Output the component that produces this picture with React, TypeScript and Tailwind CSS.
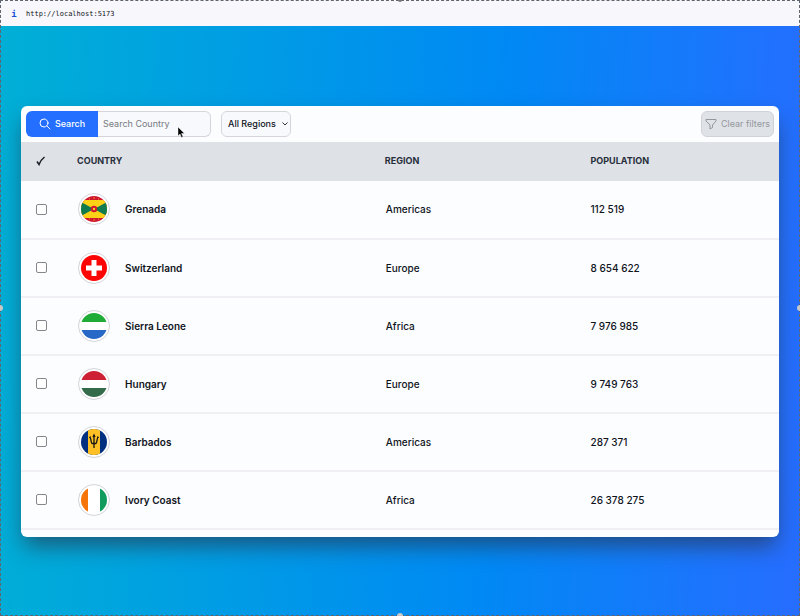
import { useState } from "react";
import type { ReactNode } from "react";

function Grenada() {
  return (
    <>
      <rect width="26" height="26" fill="#cf1530" />
      <rect y="4" width="26" height="18" fill="#fcd116" />
      <path d="M0 6 13 13 0 20ZM26 6 13 13 26 20Z" fill="#117a4e" />
      <circle cx="13" cy="13" r="3.2" fill="#cf1530" />
      <circle cx="13" cy="13" r="1.2" fill="#fcd116" />
      <path d="M12 2h2M12 24h2M8 3h1M17 3h1M8 23h1M17 23h1" stroke="#e98a22" />
    </>
  );
}

function Switzerland() {
  return (
    <>
      <rect width="26" height="26" fill="#fb0505" />
      <path d="M13 5v16M5 13h16" stroke="#fff" strokeWidth="5" />
    </>
  );
}

function Stripes({ top, bottom }: { top: string; bottom: string }) {
  return (
    <>
      <rect width="26" height="26" fill="#fff" />
      <rect width="26" height="9" fill={top} />
      <rect y="17" width="26" height="9" fill={bottom} />
    </>
  );
}

function Barbados() {
  return (
    <>
      <rect width="26" height="26" fill="#00307f" />
      <rect x="7" width="12" height="26" fill="#ffc026" />
      <path
        d="M13 7v12M9 8c1 1 1 6 2 6.500h4c1-.5 1-5.500 2-6.500M8.500 9l1-1.500M17.500 9l-1-1.500M12 8l1-2 1 2"
        fill="none"
        stroke="#141414"
        strokeWidth="1.300"
      />
    </>
  );
}

function IvoryCoast() {
  return (
    <>
      <rect width="26" height="26" fill="#fff" />
      <rect width="7" height="26" fill="#f77408" />
      <rect x="19" width="7" height="26" fill="#119b5c" />
    </>
  );
}

type Country = { name: string; region: string; population: string; flag: ReactNode };

const countries: Country[] = [
  { name: "Grenada", region: "Americas", population: "112 519", flag: <Grenada /> },
  { name: "Switzerland", region: "Europe", population: "8 654 622", flag: <Switzerland /> },
  { name: "Sierra Leone", region: "Africa", population: "7 976 985", flag: <Stripes top="#1fac36" bottom="#2868c6" /> },
  { name: "Hungary", region: "Europe", population: "9 749 763", flag: <Stripes top="#cd2034" bottom="#336b4b" /> },
  { name: "Barbados", region: "Americas", population: "287 371", flag: <Barbados /> },
  { name: "Ivory Coast", region: "Africa", population: "26 378 275", flag: <IvoryCoast /> },
];

function Flag({ children }: { children: ReactNode }) {
  return (
    <span className="flex size-8 shrink-0 items-center justify-center rounded-full border border-[#d3d5da] bg-white">
      <svg className="size-[26px] rounded-full" viewBox="0 0 26 26" aria-hidden="true">
        {children}
      </svg>
    </span>
  );
}

export default function App() {
  const [query, setQuery] = useState("");
  const [region, setRegion] = useState("All Regions");

  return (
    <div className="relative flex min-h-screen flex-col overflow-hidden bg-[linear-gradient(93deg,#00aed6_2%,#0089f4_61%,#256eff_98%)] font-['Inter',sans-serif] text-[10px] leading-4 text-[#10141c]">
      <div className="flex h-[26px] shrink-0 items-center gap-2 bg-[#f8f8fc] px-2.5 pt-0.5 font-['DejaVu_Sans_Mono',monospace] text-[7px] text-[#101018]">
        <span className="w-2 text-center text-[9px] font-bold text-[#1550d4]">i</span>
        <span>http://localhost:5173</span>
      </div>

      <main className="flex flex-1 items-center px-[21px]">
        <div className="w-full overflow-hidden rounded-md bg-[#fcfdff] pb-[7px] shadow-[0_12px_22px_-3px_rgb(40_50_70_/_0.65)]">
          <div className="flex h-9 items-center justify-between px-[5px] text-[9px]">
            <div className="flex items-center gap-2.5">
              <form className="flex" onSubmit={(e) => e.preventDefault()}>
                <button className="flex h-[26px] w-[72px] items-center justify-center gap-1 rounded-l-md bg-[#246fff] font-medium text-white">
                  <svg className="size-3" viewBox="0 0 12 12" fill="none" stroke="currentColor" strokeLinecap="round" aria-hidden="true">
                    <circle cx="5" cy="5" r="4" />
                    <path d="m8 8 3 3" />
                  </svg>
                  Search
                </button>
                <input
                  aria-label="Search Country"
                  placeholder="Search Country"
                  value={query}
                  onChange={(e) => setQuery(e.target.value)}
                  className="h-[26px] w-[113px] rounded-r-md border border-l-0 border-[#d4d6dc] bg-[#f8f9fd] px-[5px] placeholder:text-[#777980]"
                />
              </form>
              <div className="relative">
                <select
                  aria-label="Region"
                  value={region}
                  onChange={(e) => setRegion(e.target.value)}
                  className="h-[26px] w-[70px] appearance-none rounded-md border border-[#d4d6dc] bg-[#f8f9fd] pl-1.5 font-medium"
                >
                  <option>All Regions</option>
                  <option>Africa</option>
                  <option>Americas</option>
                  <option>Europe</option>
                </select>
                <svg className="pointer-events-none absolute top-2.5 right-[3px] size-1.5" viewBox="0 0 6 6" fill="none" stroke="#333" aria-hidden="true">
                  <path d="m.5 1.500 2.500 2.500 2.500-2.500" />
                </svg>
              </div>
            </div>
            <button disabled className="flex h-[26px] w-[73px] items-center justify-center gap-1 rounded-md border border-[#cfd2d7] bg-[#dfe2e6] whitespace-nowrap text-[#94979e]">
              <svg className="size-3 shrink-0" viewBox="0 0 12 12" fill="none" stroke="currentColor" strokeLinejoin="round" aria-hidden="true">
                <path d="M1 1.500h10v1.500L7.500 7v2.500L5 11V7L1 3Z" />
              </svg>
              Clear filters
            </button>
          </div>

          <table className="w-full table-fixed text-left">
            <colgroup>
              <col className="w-[7%]" />
              <col className="w-[41%]" />
              <col className="w-[27%]" />
              <col />
            </colgroup>
            <thead className="bg-[#dee1e6] text-[9px] text-[#272e3b]">
              <tr className="h-[39px]">
                <th scope="col" className="pl-[15px]">
                  <svg className="size-2.5" viewBox="0 0 10 10" fill="none" stroke="#181d26" strokeWidth="1.500" role="img" aria-label="Selected">
                    <path d="m1 5.500 2 3C4 5.500 6 3 8.500 1" />
                  </svg>
                </th>
                <th scope="col" className="pl-[3px] font-bold">COUNTRY</th>
                <th scope="col" className="font-bold">REGION</th>
                <th scope="col" className="pl-px font-bold">POPULATION</th>
              </tr>
            </thead>
            <tbody>
              {countries.map((c) => (
                <tr key={c.name} className="h-[58px] border-b-2 border-[#f0f0f4]">
                  <td className="pl-[15px]">
                    <input type="checkbox" aria-label={c.name} className="block size-[11px] appearance-none rounded-xs border border-[#85878d] bg-white checked:bg-[#246fff]" />
                  </td>
                  <td className="pl-1">
                    <div className="flex items-center gap-[15px]">
                      <Flag>{c.flag}</Flag>
                      <span className="font-semibold">{c.name}</span>
                    </div>
                  </td>
                  <td className="pl-px font-medium">{c.region}</td>
                  <td className="pl-px font-medium">{c.population}</td>
                </tr>
              ))}
            </tbody>
          </table>
        </div>
      </main>

      <div className="pointer-events-none absolute inset-0 border border-dashed border-[#60646c]" />
      <span className="pointer-events-none absolute top-0 left-1/2 size-1 -translate-x-1/2 -translate-y-1/2 rounded-full bg-[#777]" />
      <span className="pointer-events-none absolute bottom-0 left-1/2 size-1.5 -translate-x-1/2 translate-y-1/2 rounded-full bg-[#c8c8c8]" />
      <span className="pointer-events-none absolute top-1/2 left-0 size-1.5 -translate-x-1/2 -translate-y-1/2 rounded-full bg-[#c8c8c8]" />
      <span className="pointer-events-none absolute top-1/2 right-0 size-1.5 translate-x-1/2 -translate-y-1/2 rounded-full bg-[#c8c8c8]" />
      <svg className="pointer-events-none absolute top-[126px] left-[177px] h-3 w-2" viewBox="0 0 8 12" aria-hidden="true">
        <path d="M1 1v9l2-2 1.500 3.500 1.500-.7L4.500 7.500H7.500Z" fill="#050505" stroke="#fff" strokeWidth=".4" />
      </svg>
    </div>
  );
}
